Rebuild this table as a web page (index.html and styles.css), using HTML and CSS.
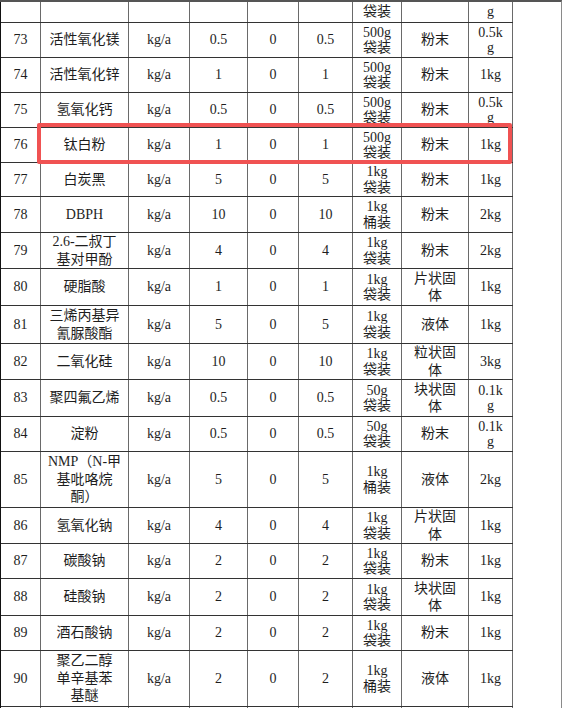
FILE: index.html
```html
<!DOCTYPE html>
<html lang="zh">
<head>
<meta charset="utf-8">
<title>原辅材料表</title>
<link rel="stylesheet" href="styles.css">
</head>
<body>
<div class="page">
  <div class="table">
    <div class="row h21"><div class="c"></div><div class="c"></div><div class="c"></div><div class="c"></div><div class="c"></div><div class="c"></div><div class="c pk">袋装</div><div class="c"></div><div class="c pk">g</div></div>
    <div class="row h35"><div class="c">73</div><div class="c nm">活性氧化镁</div><div class="c">kg/a</div><div class="c">0.5</div><div class="c">0</div><div class="c">0.5</div><div class="c pk">500g<br>袋装</div><div class="c nm">粉末</div><div class="c pk">0.5k<br>g</div></div>
    <div class="row h35"><div class="c">74</div><div class="c nm">活性氧化锌</div><div class="c">kg/a</div><div class="c">1</div><div class="c">0</div><div class="c">1</div><div class="c pk">500g<br>袋装</div><div class="c nm">粉末</div><div class="c pk">1kg</div></div>
    <div class="row h35"><div class="c">75</div><div class="c nm">氢氧化钙</div><div class="c">kg/a</div><div class="c">0.5</div><div class="c">0</div><div class="c">0.5</div><div class="c pk">500g<br>袋装</div><div class="c nm">粉末</div><div class="c pk">0.5k<br>g</div></div>
    <div class="row h35"><div class="c">76</div><div class="c nm">钛白粉</div><div class="c">kg/a</div><div class="c">1</div><div class="c">0</div><div class="c">1</div><div class="c pk">500g<br>袋装</div><div class="c nm">粉末</div><div class="c pk">1kg</div></div>
    <div class="row h34"><div class="c">77</div><div class="c nm">白炭黑</div><div class="c">kg/a</div><div class="c">5</div><div class="c">0</div><div class="c">5</div><div class="c pk">1kg<br>袋装</div><div class="c nm">粉末</div><div class="c pk">1kg</div></div>
    <div class="row h36"><div class="c">78</div><div class="c nm">DBPH</div><div class="c">kg/a</div><div class="c">10</div><div class="c">0</div><div class="c">10</div><div class="c pk">1kg<br>桶装</div><div class="c nm">粉末</div><div class="c pk">2kg</div></div>
    <div class="row h36"><div class="c">79</div><div class="c nm">2.6-二叔丁<br>基对甲酚</div><div class="c">kg/a</div><div class="c">4</div><div class="c">0</div><div class="c">4</div><div class="c pk">1kg<br>袋装</div><div class="c nm">粉末</div><div class="c pk">2kg</div></div>
    <div class="row h37"><div class="c">80</div><div class="c nm">硬脂酸</div><div class="c">kg/a</div><div class="c">1</div><div class="c">0</div><div class="c">1</div><div class="c pk">1kg<br>袋装</div><div class="c nm">片状固<br>体</div><div class="c pk">1kg</div></div>
    <div class="row h38"><div class="c">81</div><div class="c nm">三烯丙基异<br>氰脲酸酯</div><div class="c">kg/a</div><div class="c">5</div><div class="c">0</div><div class="c">5</div><div class="c pk">1kg<br>袋装</div><div class="c nm">液体</div><div class="c pk">1kg</div></div>
    <div class="row h36"><div class="c">82</div><div class="c nm">二氧化硅</div><div class="c">kg/a</div><div class="c">10</div><div class="c">0</div><div class="c">10</div><div class="c pk">1kg<br>袋装</div><div class="c nm">粒状固<br>体</div><div class="c pk">3kg</div></div>
    <div class="row h37"><div class="c">83</div><div class="c nm">聚四氟乙烯</div><div class="c">kg/a</div><div class="c">0.5</div><div class="c">0</div><div class="c">0.5</div><div class="c pk">50g<br>袋装</div><div class="c nm">块状固<br>体</div><div class="c pk">0.1k<br>g</div></div>
    <div class="row h35"><div class="c">84</div><div class="c nm">淀粉</div><div class="c">kg/a</div><div class="c">0.5</div><div class="c">0</div><div class="c">0.5</div><div class="c pk">50g<br>袋装</div><div class="c nm">粉末</div><div class="c pk">0.1k<br>g</div></div>
    <div class="row h56"><div class="c">85</div><div class="c nm">NMP（N-甲<br>基吡咯烷<br>酮）</div><div class="c">kg/a</div><div class="c">5</div><div class="c">0</div><div class="c">5</div><div class="c pk">1kg<br>桶装</div><div class="c nm">液体</div><div class="c pk">2kg</div></div>
    <div class="row h36"><div class="c">86</div><div class="c nm">氢氧化钠</div><div class="c">kg/a</div><div class="c">4</div><div class="c">0</div><div class="c">4</div><div class="c pk">1kg<br>袋装</div><div class="c nm">片状固<br>体</div><div class="c pk">1kg</div></div>
    <div class="row h35"><div class="c">87</div><div class="c nm">碳酸钠</div><div class="c">kg/a</div><div class="c">2</div><div class="c">0</div><div class="c">2</div><div class="c pk">1kg<br>袋装</div><div class="c nm">粉末</div><div class="c pk">1kg</div></div>
    <div class="row h37"><div class="c">88</div><div class="c nm">硅酸钠</div><div class="c">kg/a</div><div class="c">2</div><div class="c">0</div><div class="c">2</div><div class="c pk">1kg<br>袋装</div><div class="c nm">块状固<br>体</div><div class="c pk">1kg</div></div>
    <div class="row h35"><div class="c">89</div><div class="c nm">酒石酸钠</div><div class="c">kg/a</div><div class="c">2</div><div class="c">0</div><div class="c">2</div><div class="c pk">1kg<br>袋装</div><div class="c nm">粉末</div><div class="c pk">1kg</div></div>
    <div class="row h56"><div class="c">90</div><div class="c nm">聚乙二醇<br>单辛基苯<br>基醚</div><div class="c">kg/a</div><div class="c">2</div><div class="c">0</div><div class="c">2</div><div class="c pk">1kg<br>桶装</div><div class="c nm">液体</div><div class="c pk">1kg</div></div>
    <div class="row h35"><div class="c"></div><div class="c"></div><div class="c"></div><div class="c"></div><div class="c"></div><div class="c"></div><div class="c"></div><div class="c"></div><div class="c"></div></div>
  </div>
  <div class="highlight"></div>
</div>
</body>
</html>
```

FILE: styles.css
```css
html, body {
  margin: 0;
  padding: 0;
  background: #ffffff;
  overflow: hidden;
}

body {
  width: 563px;
  height: 708px;
  font-family: "Liberation Serif", "Noto Sans CJK SC", serif;
  font-size: 14px;
  color: #1e1e1e;
}

.page {
  position: relative;
  width: 562px;
  height: 708px;
  border-right: 1px solid #8a8a8a;
  border-top: 2px solid #555555;
  box-sizing: border-box;
  overflow: hidden;
}

.table {
  width: 513px;
  border-left: 1px solid #111111;
  box-sizing: border-box;
}

.row {
  display: grid;
  grid-template-columns: 40px 88px 61px 58px 51px 54px 49px 67px 44px;
  border-bottom: 1px solid #333333;
  box-sizing: border-box;
}

.h21 { height: 21px; }
.h34 { height: 34px; }
.h35 { height: 35px; }
.h36 { height: 36px; }
.h37 { height: 37px; }
.h38 { height: 38px; }
.h56 { height: 56px; }

.c {
  display: flex;
  align-items: center;
  justify-content: center;
  text-align: center;
  border-right: 1px solid #6a6a6a;
  box-sizing: border-box;
  line-height: 16px;
  white-space: nowrap;
}

.nm {
  line-height: 17.5px;
}

.pk {
  line-height: 15.5px;
}

.highlight {
  position: absolute;
  left: 37px;
  top: 121px;
  width: 475px;
  height: 41px;
  border: 4px solid #f05252;
  border-radius: 2px;
  box-sizing: border-box;
}
```
